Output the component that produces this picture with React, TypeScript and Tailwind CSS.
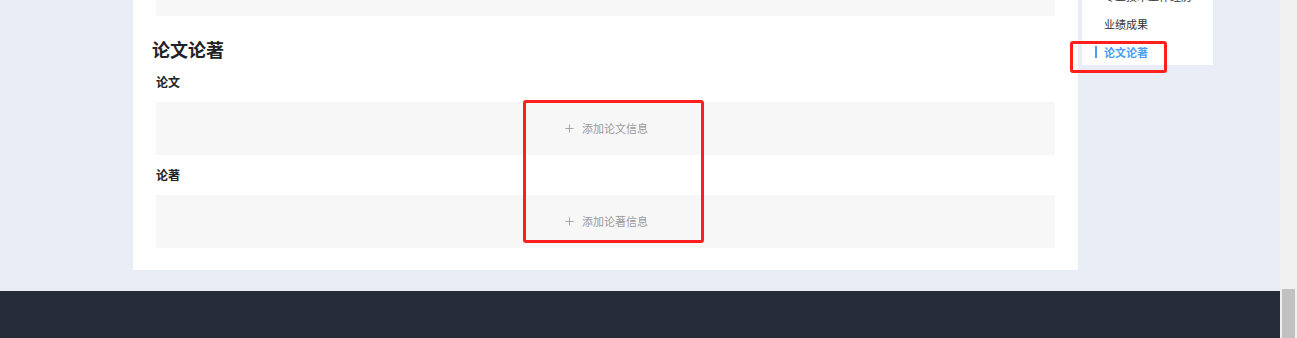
import { Plus } from "lucide-react";

const font = { fontFamily: '"Noto Sans CJK SC", "Noto Sans", sans-serif' };

function EmptyBox({ label }: { label: string }) {
  return (
    <div className="h-[53px] bg-[#f7f7f7] flex items-center justify-center gap-[6px] text-[11px] text-[#999]">
      <Plus className="h-[13px] w-[13px] text-[#888]" strokeWidth={1.3} />
      <span className="-mt-[1px]">{label}</span>
    </div>
  );
}

export default function App() {
  const navItems = ["专业技术工作经历", "业绩成果", "论文论著"];

  return (
    <div className="relative flex h-[338px] w-[1297px] overflow-hidden" style={font}>
      <div className="flex flex-col w-[1280px]">
        {/* Content area */}
        <div className="flex h-[291px] bg-[#e9edf5] pl-[133px]">
          {/* Main card */}
          <div className="w-[945px] h-[270px] bg-white px-[23px] pb-[22px]">
            <div className="h-[16px] bg-[#f7f7f7]" />

            <h2 className="mt-[21px] -ml-[4px] text-[18px] leading-[24px] font-bold text-[#222]">论文论著</h2>

            <div className="mt-[12px] text-[12px] leading-[18px] font-bold text-[#222]">论文</div>
            <div className="mt-[11px]">
              <EmptyBox label="添加论文信息" />
            </div>

            <div className="mt-[11px] text-[12px] leading-[18px] font-bold text-[#222]">论著</div>
            <div className="mt-[11px]">
              <EmptyBox label="添加论著信息" />
            </div>
          </div>

          {/* Side nav */}
          <div className="ml-[4px] w-[131px] h-[65px] bg-white overflow-hidden">
            <div className="-mt-[18px]">
              {navItems.map((item, i) => {
                const active = i === navItems.length - 1;
                return (
                  <div key={item} className="relative h-[28px] flex items-center pl-[22px] text-[11px] whitespace-nowrap">
                    {active && <span className="absolute left-[13px] top-[8px] h-[12px] w-[2px] bg-[#4a9ff5]" />}
                    <span className={active ? "text-[#4a9ff5] font-bold" : "text-[#333]"}>{item}</span>
                  </div>
                );
              })}
            </div>
          </div>
        </div>

        {/* Footer */}
        <div className="flex-1 bg-[#262d38]" />
      </div>

      {/* Scrollbar */}
      <div className="w-[17px] bg-[#f0f0f0] flex flex-col justify-end items-center">
        <div className="w-[13px] h-[49px] bg-[#c1c1c1]" />
      </div>

      {/* Annotation boxes */}
      <div className="absolute left-[523px] top-[100px] w-[181px] h-[143px] border-[3px] border-[#ff1f1f] rounded-[3px]" />
      <div className="absolute left-[1070px] top-[41px] w-[97px] h-[32px] border-[3px] border-[#ff1f1f] rounded-[3px]" />
    </div>
  );
}
